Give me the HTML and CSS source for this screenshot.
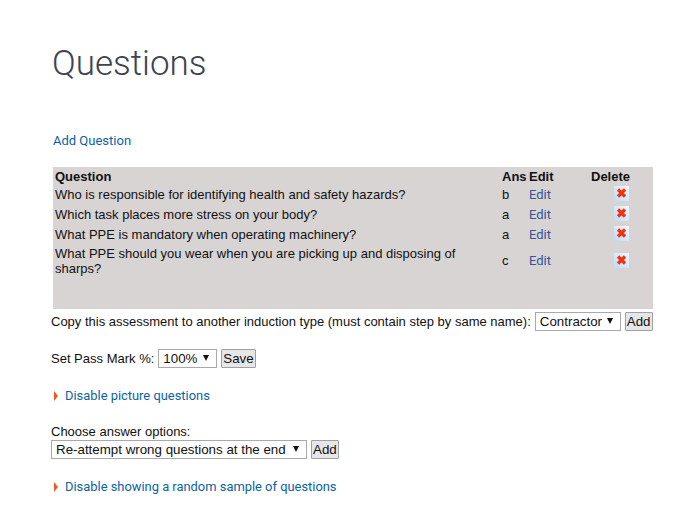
FILE: index.html
```html
<!DOCTYPE html>
<html lang="en">
<head>
    <meta charset="UTF-8">
    <title>Questions</title>
    <link rel="stylesheet" href="styles.css">
</head>
<body>
    <!-- Shared delete icon -->
    <svg class="icon-defs" aria-hidden="true">
        <symbol id="delete" viewBox="0 0 15 15">
            <path d="M4 3.5l7 7M11 3.5l-7 7" stroke="#f4310a" stroke-width="3.2"/>
        </symbol>
    </svg>

    <div class="page">
        <h1 class="title">Questions</h1>

        <a href="#" class="link add-question">Add Question</a>

        <!-- Question list -->
        <div class="question-box">
            <table class="questions">
                <tr>
                    <th class="col-question">Question</th>
                    <th class="col-ans">Ans</th>
                    <th class="col-edit">Edit</th>
                    <th class="col-delete">Delete</th>
                </tr>
                <tr>
                    <td>Who is responsible for identifying health and safety hazards?</td>
                    <td>b</td>
                    <td><a href="#" class="edit-link">Edit</a></td>
                    <td class="delete-cell"><svg class="delete-icon"><use href="#delete"/></svg></td>
                </tr>
                <tr>
                    <td>Which task places more stress on your body?</td>
                    <td>a</td>
                    <td><a href="#" class="edit-link">Edit</a></td>
                    <td class="delete-cell"><svg class="delete-icon"><use href="#delete"/></svg></td>
                </tr>
                <tr>
                    <td>What PPE is mandatory when operating machinery?</td>
                    <td>a</td>
                    <td><a href="#" class="edit-link">Edit</a></td>
                    <td class="delete-cell"><svg class="delete-icon"><use href="#delete"/></svg></td>
                </tr>
                <tr>
                    <td class="two-line">What PPE should you wear when you are picking up and disposing of sharps?</td>
                    <td>c</td>
                    <td><a href="#" class="edit-link">Edit</a></td>
                    <td class="delete-cell"><svg class="delete-icon"><use href="#delete"/></svg></td>
                </tr>
            </table>
        </div>

        <div class="form-row copy-row">
            <span>Copy this assessment to another induction type (must contain step by same name):</span>
            <div class="select-wrap"><select class="select select-type"><option>Contractor</option></select></div>
            <button class="btn">Add</button>
        </div>

        <div class="form-row pass-row">
            <span>Set Pass Mark %:</span>
            <div class="select-wrap"><select class="select select-pass"><option>100%</option></select></div>
            <button class="btn">Save</button>
        </div>

        <a href="#" class="link toggle picture-toggle">Disable picture questions</a>

        <div class="answer-label">Choose answer options:</div>
        <div class="form-row">
            <div class="select-wrap"><select class="select select-answer"><option>Re-attempt wrong questions at the end</option></select></div>
            <button class="btn">Add</button>
        </div>

        <a href="#" class="link toggle sample-toggle">Disable showing a random sample of questions</a>
    </div>
</body>
</html>
```

FILE: styles.css
```css
/* Reset basic elements */
body, html {
    margin: 0;
    padding: 0;
    background: white;
    color: #111;
    font-family: 'Liberation Sans', Arial, sans-serif;
    font-size: 13px;
}

.icon-defs {
    display: none;
}

.page {
    padding: 42px 40px 0 51px;
}

.title {
    margin: 0 0 0 1px;
    font-family: Roboto, sans-serif;
    font-weight: 300;
    font-size: 35px;
    line-height: 44px;
    color: #3d4352;
}

.link {
    display: block;
    font-family: Roboto, sans-serif;
    font-size: 13px;
    line-height: 18px;
    color: #0b62a4;
    text-decoration: none;
}

.add-question {
    margin: 46px 0 0 2px;
}

/* Question table */
.question-box {
    margin: 17px 0 0 2px;
    width: 600px;
    height: 142px;
    background: #d8d4d4;
}

.questions {
    width: 100%;
    border-collapse: collapse;
    table-layout: fixed;
}

.questions th, .questions td {
    box-sizing: border-box;
    padding: 1px 2px;
    line-height: 15px;
}

.questions th {
    padding: 2px 2px 0;
    text-align: left;
}

.questions .two-line {
    padding-top: 2px;
}

.col-question {
    width: 447px;
}

.col-ans {
    width: 27px;
}

.col-edit {
    width: 62px;
}

.edit-link {
    font-family: Roboto, sans-serif;
    color: #33559b;
    text-decoration: none;
}

.questions .delete-cell {
    padding: 2px 2px 3px;
}

.delete-icon {
    display: block;
    width: 15px;
    height: 15px;
    margin: 0 auto;
    background: linear-gradient(45deg, #bcdcf6, #e4f0fa 75%, #f4f8fc);
}

/* Form rows */
.form-row {
    display: flex;
    align-items: center;
    gap: 4px;
    white-space: nowrap;
}

.copy-row {
    margin-top: 3px;
}

.pass-row {
    margin-top: 18px;
}

.select-wrap {
    position: relative;
    display: flex;
}

/* Small black arrow of the dropdown */
.select-wrap::after {
    content: "";
    position: absolute;
    right: 8px;
    top: 6px;
    border-top: 6px solid #111;
    border-left: 3.5px solid transparent;
    border-right: 3.5px solid transparent;
}

.select {
    appearance: none;
    height: 19px;
    padding: 0 0 0 4px;
    border: 1px solid #a9a9a9;
    border-radius: 0;
    background: white;
    color: #111;
    font-family: 'Liberation Sans', Arial, sans-serif;
    font-size: 13.33px;
}

.select-type {
    width: 86px;
}

.select-pass {
    width: 59px;
}

.select-answer {
    width: 256px;
}

.btn {
    height: 19px;
    padding: 0 1px;
    border: 1px solid #a0a0a0;
    border-radius: 1px;
    background: #e6e6e6;
    color: #111;
    font-family: 'Liberation Sans', Arial, sans-serif;
    font-size: 13.33px;
}

/* Triangle in front of the toggle links */
.toggle {
    position: relative;
    margin-left: 1px;
    padding-left: 13px;
    font-size: 12.9px;
}

.toggle::before {
    content: "";
    position: absolute;
    left: 2px;
    top: 4px;
    border-left: 4.5px solid #f0581e;
    border-top: 5px solid transparent;
    border-bottom: 5px solid transparent;
}

.picture-toggle {
    margin-top: 19px;
}

.answer-label {
    margin-top: 19px;
    line-height: 16px;
}

.sample-toggle {
    margin-top: 19px;
}
```
